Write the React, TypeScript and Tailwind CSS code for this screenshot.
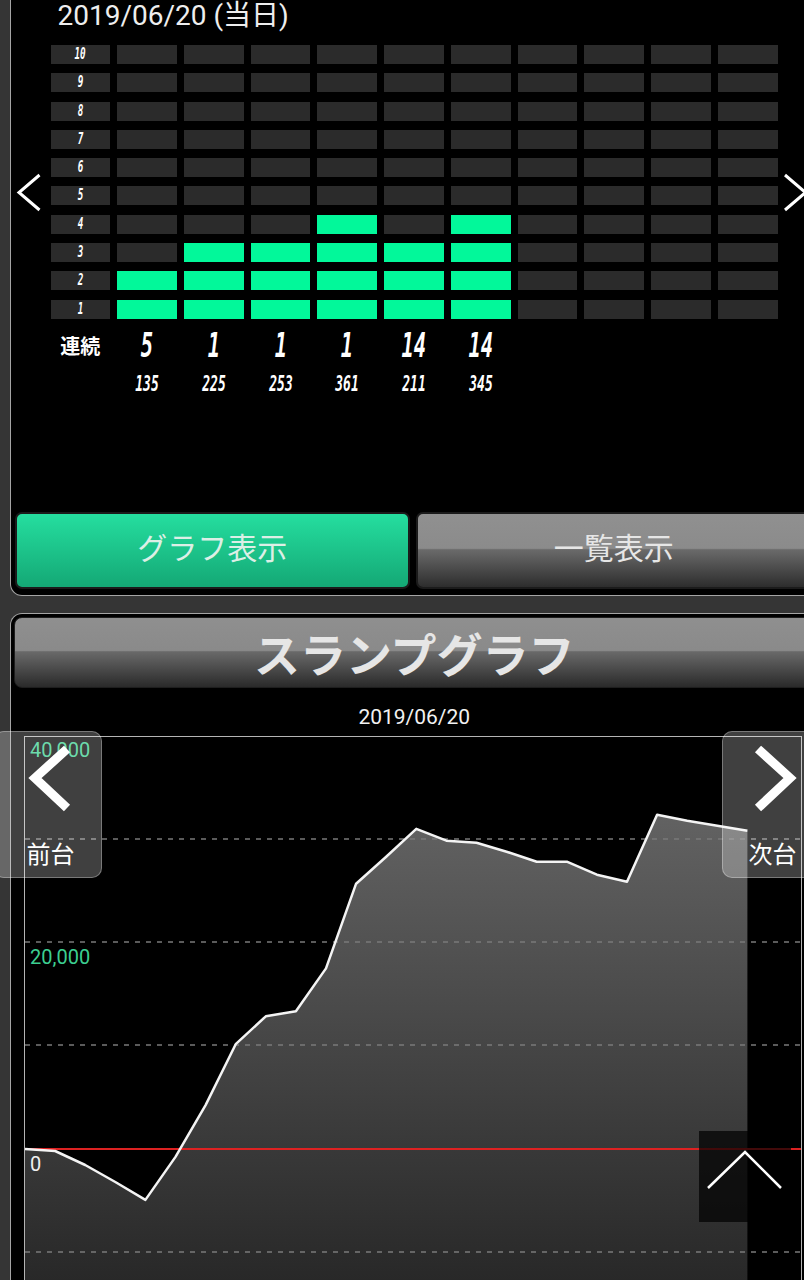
import React from "react";

const counts = [2, 3, 3, 4, 3, 4, 0, 0, 0, 0];
const streaks = ["5", "1", "1", "1", "14", "14"];
const games = ["135", "225", "253", "361", "211", "345"];
const levels = [10, 9, 8, 7, 6, 5, 4, 3, 2, 1];

// 差枚推移 (1点 = 約30px)
const slump = [
  0, -190, -1550, -3200, -4940, -770, 4260, 10170, 12880, 13370, 17530, 25760, 28380, 31090, 29930, 29730, 28860,
  27890, 27890, 26630, 25950, 32450, 31860, 31380, 30890,
];

const seg = "inline-block italic font-bold font-['DejaVu_Sans_Mono',monospace] scale-x-[0.62] text-white";

function Chevron({ points, width, height, stroke, className }: { points: string; width: number; height: number; stroke: number; className?: string }) {
  return (
    <svg width={width} height={height} className={className} overflow="visible">
      <polyline points={points} fill="none" stroke="white" strokeWidth={stroke} strokeLinecap="butt" strokeLinejoin="miter" />
    </svg>
  );
}

function SlumpChart() {
  const toX = (i: number) => i * 30.1;
  const toY = (v: number) => 412 - v * 0.0103;
  const pts = slump.map((v, i) => `${toX(i).toFixed(1)},${toY(v).toFixed(1)}`).join(" ");
  const last = toX(slump.length - 1).toFixed(1);
  const area = `0,560 ${pts} ${last},560`;

  return (
    <svg width="776" height="560" className="block">
      <defs>
        <linearGradient id="slumpFill" x1="0" y1="70" x2="0" y2="560" gradientUnits="userSpaceOnUse">
          <stop offset="0" stopColor="#636363" />
          <stop offset="1" stopColor="#262626" />
        </linearGradient>
      </defs>
      <polygon points={area} fill="url(#slumpFill)" />
      {[102, 205, 308, 515].map((y) => (
        <line key={y} x1="0" x2="776" y1={y} y2={y} stroke="#7a7a7a" strokeWidth="1.5" strokeDasharray="5 6" />
      ))}
      <line x1="0" x2="776" y1="412" y2="412" stroke="#dd2222" strokeWidth="2" />
      <polyline points={pts} fill="none" stroke="#f4f4f4" strokeWidth="2.5" strokeLinejoin="round" />
      <text x="5" y="20" fill="#3ccf91" fontSize="20" fontFamily="Roboto, sans-serif">40,000</text>
      <text x="5" y="227" fill="#3ccf91" fontSize="20" fontFamily="Roboto, sans-serif">20,000</text>
      <text x="5" y="434" fill="#f0f0f0" fontSize="20" fontFamily="Roboto, sans-serif">0</text>
    </svg>
  );
}

export default function App() {
  return (
    <div className="relative h-[1280px] w-[804px] overflow-hidden bg-[#353535] font-['Roboto','Noto_Sans_CJK_JP',sans-serif]">
      {/* 大当り履歴 */}
      <section className="relative ml-[10px] w-[806px] rounded-bl-[12px] border-b-[1.5px] border-l-[1.5px] border-r-[1.5px] border-[#a5a5a5] bg-black pb-[6.5px]">
        <p className="pl-[46.5px] pt-[3px] text-[28px] leading-[26px] text-[#eeeeee]">2019/06/20 (当日)</p>

        <div className="ml-[39.5px] mt-[16px] grid w-[727px] grid-cols-11 gap-x-[7.2px] gap-y-[9.3px]">
          {levels.map((lv) => (
            <React.Fragment key={lv}>
              <div className="flex h-[19px] items-center justify-center bg-[#2b2b2b]">
                <span className={`${seg} text-[15px] leading-none`}>{lv}</span>
              </div>
              {counts.map((c, i) => (
                <div key={i} className={c >= lv ? "h-[19px] bg-[#02f89a]" : "h-[19px] bg-[#2b2b2b]"} />
              ))}
            </React.Fragment>
          ))}
        </div>

        <div className="ml-[39.5px] mt-[10px] grid h-[34px] w-[727px] grid-cols-11 items-center gap-x-[7.2px]">
          <span className="text-center text-[20px] font-bold text-white font-['Noto_Sans_CJK_JP',sans-serif]">連続</span>
          {streaks.map((s, i) => (
            <span key={i} className="text-center">
              <span className={`${seg} text-[33px] leading-none`}>{s}</span>
            </span>
          ))}
        </div>

        <div className="ml-[39.5px] mt-[11px] grid h-[24px] w-[727px] grid-cols-11 items-center gap-x-[7.2px]">
          <span />
          {games.map((g, i) => (
            <span key={i} className="text-center">
              <span className={`${seg} text-[21px] leading-none`}>{g}</span>
            </span>
          ))}
        </div>

        <div className="mt-[114px] grid grid-cols-2 gap-[6px] px-[3.5px]">
          <button className="flex h-[77px] items-center justify-center rounded-[7px] border-2 border-[#1b1b1b] bg-[linear-gradient(to_bottom,#25de9f,#14a875)] pb-[8px] text-[30px] text-[#dcefe6] font-['Noto_Sans_CJK_JP',sans-serif]">
            グラフ表示
          </button>
          <button className="flex h-[77px] items-center justify-center rounded-[7px] border-2 border-[#1b1b1b] bg-[linear-gradient(to_bottom,#909090_0%,#8b8b8b_47%,#6a6a6a_49%,#2d2d2d_100%)] pb-[8px] text-[30px] text-[#e6e6e6] font-['Noto_Sans_CJK_JP',sans-serif]">
            一覧表示
          </button>
        </div>

        <Chevron className="absolute left-[4px] top-[172px]" width={30} height={42} stroke={3} points="24.5,3 4,20.5 24.5,38" />
        <Chevron className="absolute left-[768.5px] top-[172px]" width={30} height={42} stroke={3} points="5,3 25.5,20.5 5,38" />
      </section>

      {/* スランプグラフ */}
      <section className="ml-[10px] mt-[17px] w-[806px] rounded-tl-[12px] border-l-[1.5px] border-r-[1.5px] border-t-[1.5px] border-[#a5a5a5] bg-black pl-[2.5px] pt-[2.5px]">
        <div className="flex h-[71px] items-center justify-center rounded-[8px] border border-[#1e1e1e] bg-[linear-gradient(to_bottom,#8f8f8f_0%,#8a8a8a_47%,#696969_49%,#2a2a2a_100%)]">
          <h2 className="text-[46px] font-bold leading-none text-[#e6e6e6] font-['Noto_Sans_CJK_JP',sans-serif]">スランプグラフ</h2>
        </div>

        <p className="mt-[18px] text-center text-[21px] leading-[22px] text-[#f2f2f2]">2019/06/20</p>

        <div className="relative ml-[10px] mt-[8px] h-[560px] w-[778px] border-l border-r border-t border-[#b4b4b4]">
          <SlumpChart />

          <div className="absolute left-[-31px] top-[-6px] h-[147px] w-[108px] rounded-[10px] border border-white/30 bg-white/25 pl-[30px] pt-[14px]">
            <Chevron width={44} height={66} stroke={9} points="42,3 10,32 42,62" />
            <p className="ml-[2px] mt-[27px] text-[24px] leading-[28px] text-white font-['Noto_Sans_CJK_JP',sans-serif]">前台</p>
          </div>

          <div className="absolute left-[697px] top-[-6px] h-[147px] w-[110px] rounded-[10px] border border-white/30 bg-white/25 pl-[28px] pt-[14px]">
            <Chevron width={44} height={66} stroke={9} points="7,3 39,32 7,62" />
            <p className="ml-[-2px] mt-[27px] text-[24px] leading-[28px] text-white font-['Noto_Sans_CJK_JP',sans-serif]">次台</p>
          </div>
        </div>
      </section>

      {/* ページトップ */}
      <div className="absolute left-[699px] top-[1131px] h-[91px] w-[92px] bg-black/70">
        <Chevron width={92} height={91} stroke={2.5} points="9,57 46,21 82,57" />
      </div>
    </div>
  );
}
